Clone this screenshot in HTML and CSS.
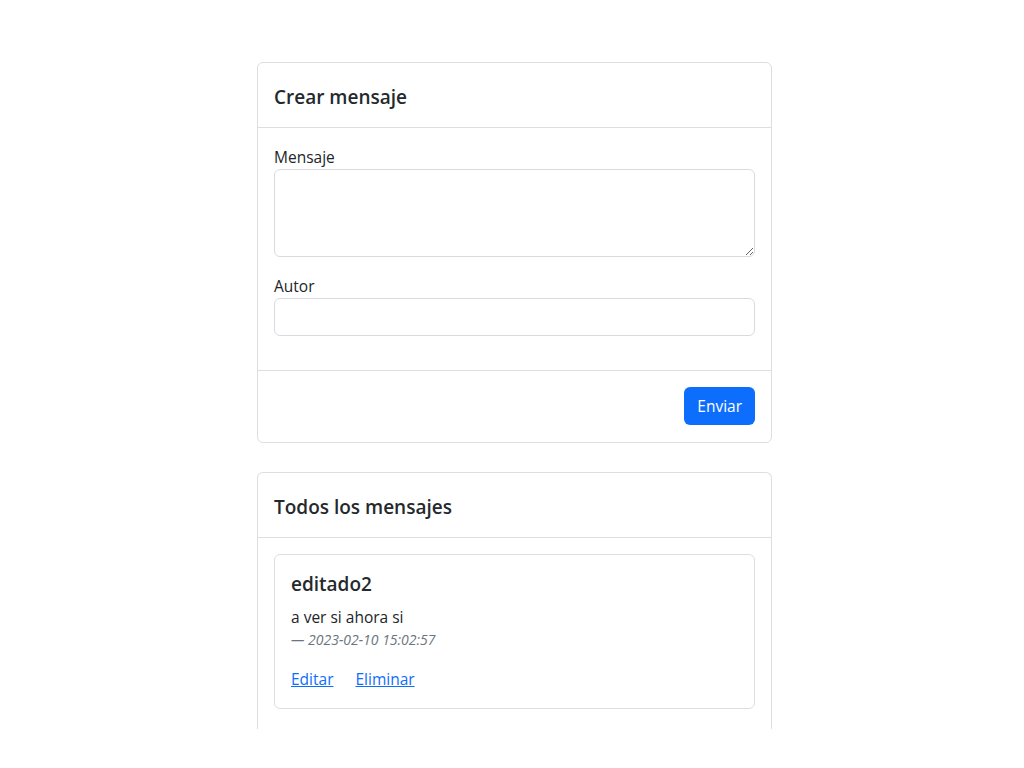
FILE: index.html
```html
<!DOCTYPE html>
<html lang="es">
<head>
<meta charset="utf-8">
<title>Mensajes</title>
<link rel="stylesheet" href="styles.css">
</head>
<body>
<main class="page">
  <section class="card">
    <header class="card-header"><h4 class="card-title">Crear mensaje</h4></header>
    <div class="card-body">
      <div class="field">
        <label class="form-label" for="mensaje">Mensaje</label>
        <textarea class="form-control textarea" id="mensaje"></textarea>
      </div>
      <div class="field">
        <label class="form-label" for="autor">Autor</label>
        <input class="form-control" id="autor" type="text">
      </div>
    </div>
    <footer class="card-footer">
      <button class="btn" type="button">Enviar</button>
    </footer>
  </section>

  <section class="card card-open">
    <header class="card-header"><h4 class="card-title">Todos los mensajes</h4></header>
    <div class="card-body">
      <article class="msg">
        <h5 class="msg-title">editado2</h5>
        <p class="msg-text">a ver si ahora si</p>
        <p class="msg-meta">— 2023-02-10 15:02:57</p>
        <div class="msg-links">
          <a href="#">Editar</a>
          <a href="#">Eliminar</a>
        </div>
      </article>
    </div>
  </section>
</main>
</body>
</html>
```

FILE: styles.css
```css
* { box-sizing: border-box; }
html, body { margin: 0; padding: 0; background: #fff; }
body {
  font-family: "Open Sans", "Noto Sans", sans-serif;
  font-size: 15.5px;
  line-height: 24px;
  color: #212529;
  height: 768px;
  overflow: hidden;
}
.page {
  width: 515px;
  margin: 0 0 0 257px;
  padding-top: 62px;
  display: flex;
  flex-direction: column;
  gap: 29px;
}
.card {
  border: 1px solid #dcdee1;
  border-radius: 6px;
  background: #fff;
}
.card-open {
  border-bottom: none;
  border-radius: 6px 6px 0 0;
  height: 257px;
  overflow: hidden;
}
.card-header {
  padding: 22px 16px 18px;
  border-bottom: 1px solid #dcdee1;
}
.card-title {
  margin: 0;
  font-size: 19px;
  line-height: 24px;
  font-weight: 600;
  color: #25292d;
}
.card-body {
  padding: 16px;
}
.field { margin-bottom: 16px; display: flex; flex-direction: column; }
.field:last-child { margin-bottom: 18px; }
.form-label { padding-top: 2px; line-height: 22px; margin-bottom: 1px; }
.form-control {
  display: block;
  width: 100%;
  height: 38px;
  border: 1px solid #d7dbe0;
  border-radius: 6px;
  padding: 6px 12px;
  font: inherit;
  color: #212529;
  background: #fff;
}
.textarea { height: 88px; resize: vertical; }
.card-footer {
  padding: 16px 16px 17px;
  border-top: 1px solid #dcdee1;
  display: flex;
  justify-content: flex-end;
}
.btn {
  height: 38px;
  padding: 0 13px;
  border: none;
  border-radius: 6px;
  background: #0d6efd;
  color: #fff;
  font: inherit;
}
.msg {
  border: 1px solid #dcdee1;
  border-radius: 6px;
  padding: 15px 16px 17px;
}
.msg-title {
  margin: 0 0 7px;
  font-size: 19px;
  line-height: 28px;
  font-weight: 600;
  color: #25292d;
}
.msg-text { margin: 0; }
.msg-meta {
  margin: 0 0 17px;
  font-size: 14px;
  line-height: 21px;
  font-style: italic;
  color: #6c757d;
}
.msg-links { display: flex; gap: 22px; }
.msg-links a { color: #0d6efd; text-decoration: underline; }
```
